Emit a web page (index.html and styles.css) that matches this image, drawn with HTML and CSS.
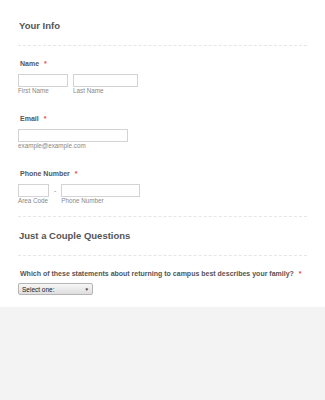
FILE: index.html
```html
<!DOCTYPE html>
<html lang="en">
<head>
    <meta charset="UTF-8">
    <meta name="viewport" content="width=device-width, initial-scale=1.0">
    <title>Your Info</title>
    <link rel="stylesheet" href="styles.css">
</head>
<body>
    <form class="form">
        <!-- Section: Your Info -->
        <div class="section-head">
            <h2>Your Info</h2>
        </div>

        <div class="field">
            <label class="field-label">Name <span class="req">*</span></label>
            <div class="row">
                <div class="sub">
                    <input type="text" class="input w-first">
                    <span class="sub-label">First Name</span>
                </div>
                <div class="sub">
                    <input type="text" class="input w-last">
                    <span class="sub-label">Last Name</span>
                </div>
            </div>
        </div>

        <div class="field">
            <label class="field-label">Email <span class="req">*</span></label>
            <div class="sub">
                <input type="text" class="input w-email">
                <span class="sub-label">example@example.com</span>
            </div>
        </div>

        <div class="field">
            <label class="field-label">Phone Number <span class="req">*</span></label>
            <div class="row">
                <div class="sub">
                    <input type="text" class="input w-area">
                    <span class="sub-label">Area Code</span>
                </div>
                <span class="dash">-</span>
                <div class="sub">
                    <input type="text" class="input w-phone">
                    <span class="sub-label">Phone Number</span>
                </div>
            </div>
        </div>

        <!-- Section: Just a Couple Questions -->
        <div class="section-head divided">
            <h2>Just a Couple Questions</h2>
        </div>

        <div class="field last">
            <label class="field-label">Which of these statements about returning to campus best describes your family? <span class="req">*</span></label>
            <div class="select">
                <span>Select one:</span>
                <span class="arrow">&#9660;</span>
            </div>
        </div>
    </form>
</body>
</html>
```

FILE: styles.css
```css
body {
    margin: 0;
    padding: 0;
    background-color: #f3f3f3;
    font-family: "Liberation Sans", Arial, sans-serif;
    color: #555;
}
.form {
    background: #fff;
    padding: 0 18px 12px 18px;
}
.section-head {
    padding: 19px 0 12px 1px;
    border-bottom: 1px dashed #e6e6e6;
}
.section-head.divided {
    border-top: 1px dashed #e6e6e6;
    margin-top: 11px;
    padding-top: 12px;
}
.section-head h2 {
    margin: 0;
    font-size: 9.5px;
    line-height: 14px;
    font-weight: bold;
    color: #555;
}
.field {
    padding-top: 12px;
}
.field + .field {
    padding-top: 18px;
}
.field.last {
    padding-top: 12px;
}
.field-label {
    display: block;
    padding-left: 2px;
    font-size: 7px;
    line-height: 12px;
    font-weight: bold;
    color: #555;
    margin-bottom: 4px;
}
.last .field-label {
    margin-bottom: 3px;
}
.req {
    color: #e54b4b;
    margin-left: 3px;
}
.row {
    display: flex;
    align-items: flex-start;
    gap: 5px;
}
.sub {
    display: flex;
    flex-direction: column;
}
.input {
    box-sizing: border-box;
    height: 13px;
    margin: 0;
    padding: 0;
    border: 1px solid #d3d3d3;
    background: #fff;
}
.w-first { width: 50px; }
.w-last { width: 65px; }
.w-email { width: 110px; }
.w-area { width: 31px; }
.w-phone { width: 79px; }
.sub-label {
    font-size: 6.3px;
    line-height: 8px;
    color: #888;
}
.dash {
    font-size: 7px;
    line-height: 13px;
    color: #888;
}
.select {
    box-sizing: border-box;
    width: 75px;
    height: 12px;
    display: flex;
    justify-content: space-between;
    align-items: center;
    padding: 0 3px 0 3px;
    border: 1px solid #b5b5b5;
    border-radius: 2px;
    background: linear-gradient(#f7f7f7, #dedede);
    font-size: 6.5px;
    color: #222;
}
.select .arrow {
    font-size: 4.5px;
    color: #333;
}
```
